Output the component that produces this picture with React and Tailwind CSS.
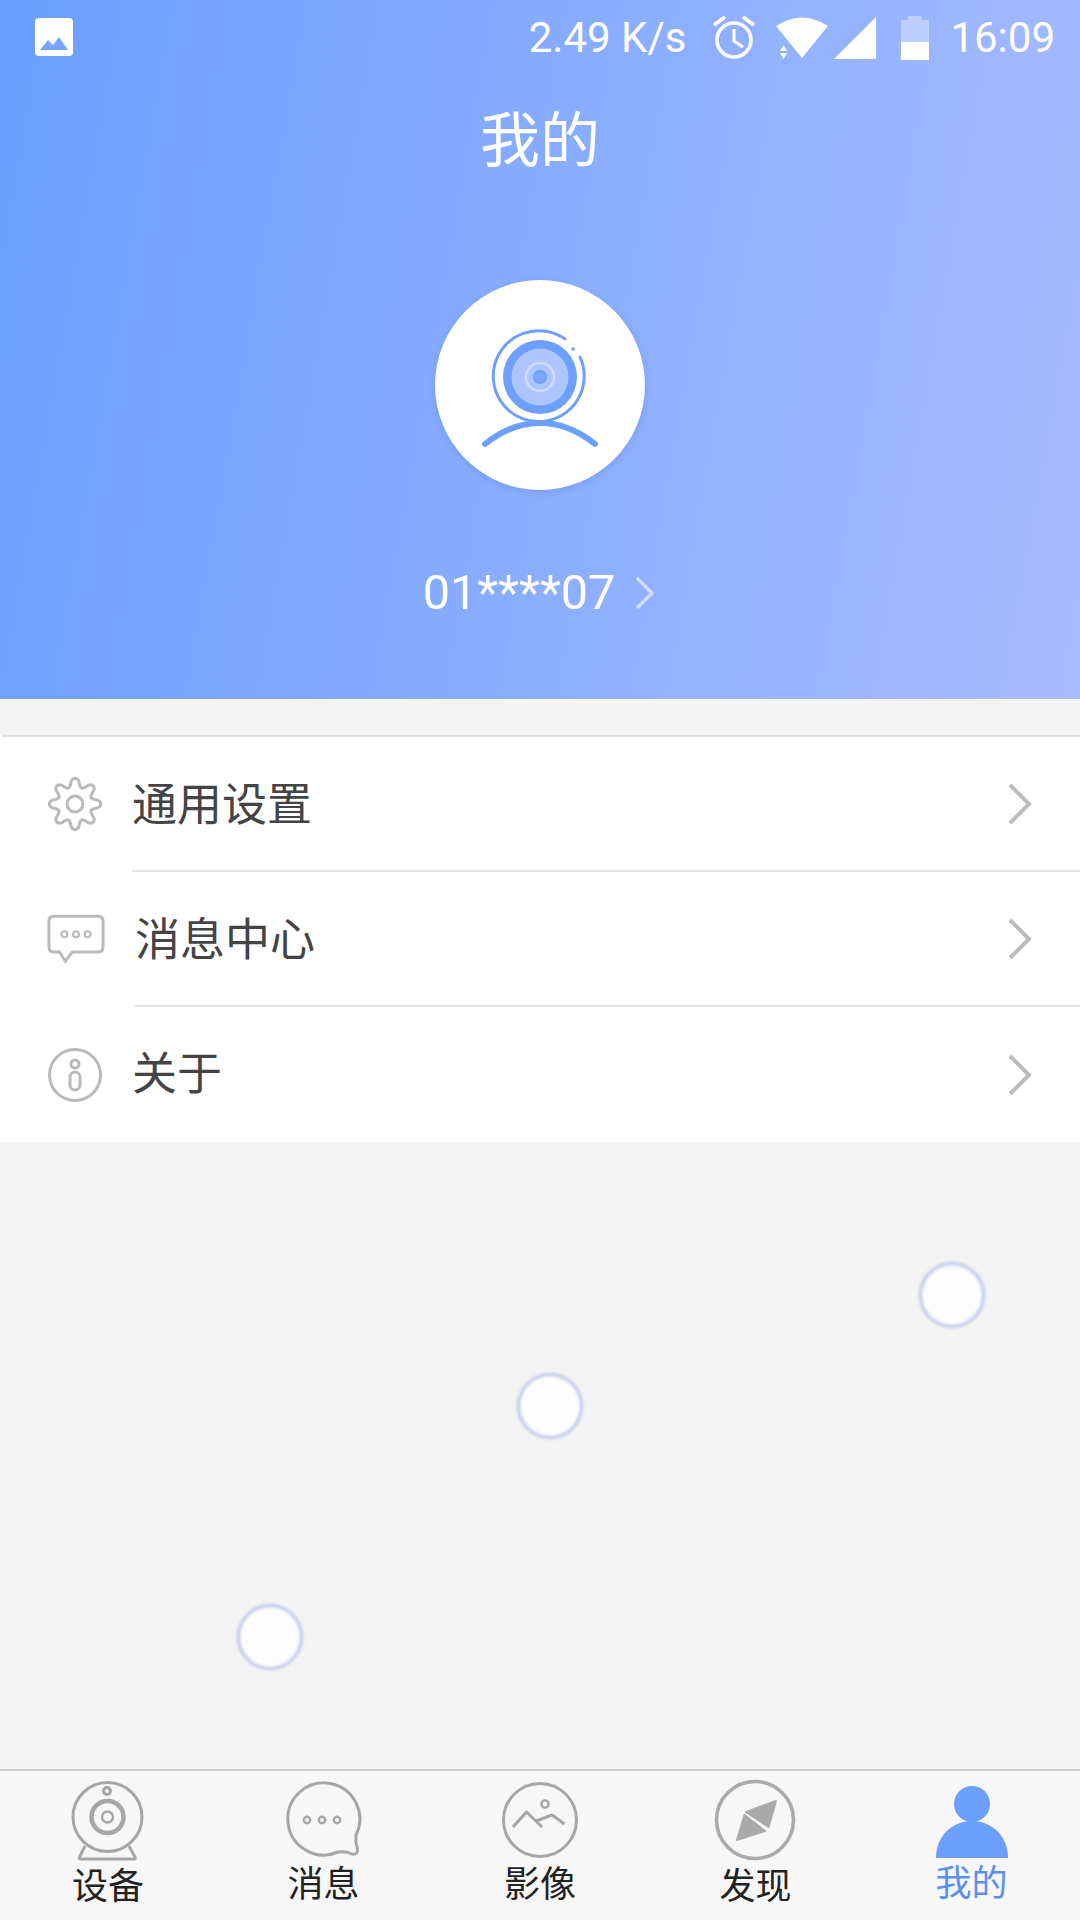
import React from 'react';

function gearPath(cx, cy){
  // rounded 8 lobe outline
  const pts = [];
  for (let i = 0; i < 160; i++) {
    const a = (i / 160) * Math.PI * 2;
    const c = Math.cos(8 * (a + Math.PI / 2));
    const r = 21.5 + 4.2 * Math.sign(c) * Math.pow(Math.abs(c), 0.7);
    pts.push(`${(cx + r * Math.cos(a)).toFixed(2)} ${(cy + r * Math.sin(a)).toFixed(2)}`);
  }
  return `M${pts.join('L')}Z`;
}

function Chevron(){
  return (
    <svg width="24" height="42" viewBox="0 0 24 42" fill="none" className="shrink-0">
      <path d="M2 2 L21 21 L2 40" stroke="#bcbcbc" strokeWidth="4" />
    </svg>
  );
}

function GearIcon(){
  return (
    <svg width="60" height="60" viewBox="0 0 60 60" fill="none" stroke="#bababa" strokeWidth="3">
      <path d={gearPath(30, 30)} />
      <circle cx="30" cy="30" r="8" />
    </svg>
  );
}

function MessageIcon(){
  return (
    <svg width="60" height="50" viewBox="0 0 60 50" fill="none" stroke="#bababa" strokeWidth="3" className="ml-[2px]">
      <path d="M7 1.5 H53 Q58 1.5 58 6.5 V33 Q58 38.5 53 38.5 H26 L19 48 L13 38.5 H7 Q2 38.5 2 33 V6.5 Q2 1.5 7 1.5 Z" />
      <circle cx="18" cy="20" r="3" strokeWidth="2.2" />
      <circle cx="30" cy="20" r="3" strokeWidth="2.2" />
      <circle cx="42" cy="20" r="3" strokeWidth="2.2" />
    </svg>
  );
}

function InfoIcon(){
  return (
    <svg width="60" height="60" viewBox="0 0 60 60" fill="none" stroke="#bababa" strokeWidth="3">
      <circle cx="30" cy="30" r="25.5" />
      <circle cx="30" cy="19" r="4" />
      <rect x="25" y="27" width="10" height="18" rx="5" />
    </svg>
  );
}

const rows = [
  { label: '通用设置', icon: <GearIcon />, cls: 'h-[133px]', text: 'ml-[27px] mt-[4px]' },
  { label: '消息中心', icon: <MessageIcon />, cls: 'h-[133px]', text: 'ml-[30px] mt-[4px]' },
  { label: '关于', icon: <InfoIcon />, cls: 'h-[135px]', text: 'ml-[27px]' },
];

function DeviceIcon(){
  return (
    <svg width="96" height="96" viewBox="0 0 96 96" fill="none" stroke="#a6a6a6" strokeWidth="3">
      <circle cx="47.5" cy="46" r="34.5" />
      <circle cx="47" cy="20" r="3.5" />
      <circle cx="47.5" cy="46" r="16" strokeWidth="4.5" />
      <circle cx="47.5" cy="46" r="5.5" strokeWidth="2.4" />
      <path d="M25 75 L19.5 86 Q19 88 21 88 H74 Q76 88 75 86 L69 75" />
    </svg>
  );
}

function ChatIcon(){
  return (
    <svg width="96" height="96" viewBox="0 0 96 96" fill="none" stroke="#a6a6a6" strokeWidth="3" className="ml-[-3px]">
      <path d="M81 64 A36 36 0 1 0 63 81 Q71 80 77 83 Q83 84 82.5 78 Q80 71 81 64 Z" strokeLinejoin="round" />
      <circle cx="32" cy="49" r="3.2" strokeWidth="2.4" />
      <circle cx="47" cy="49" r="3.2" strokeWidth="2.4" />
      <circle cx="62" cy="49" r="3.2" strokeWidth="2.4" />
    </svg>
  );
}

function GalleryIcon(){
  return (
    <svg width="96" height="96" viewBox="0 0 96 96" fill="none" stroke="#a6a6a6" strokeWidth="3">
      <circle cx="48" cy="49" r="36.5" />
      <circle cx="53" cy="33" r="3.6" strokeWidth="2.4" />
      <path d="M21 56 L34.5 41 L50 56 M44 50 L60 44 L72.5 53" strokeLinejoin="round" />
    </svg>
  );
}

function CompassIcon(){
  return (
    <svg width="96" height="96" viewBox="0 0 96 96" fill="none">
      <circle cx="47" cy="49" r="38.5" stroke="#aaaaaa" strokeWidth="3.6" />
      <path d="M38 41 L68 30 L60.5 56 Z" fill="#aaaaaa" stroke="#aaaaaa" strokeWidth="2" strokeLinejoin="round" />
      <path d="M36.5 44 L57 60 L29 69 Z" fill="#aaaaaa" stroke="#aaaaaa" strokeWidth="2" strokeLinejoin="round" />
    </svg>
  );
}

function PersonIcon(){
  return (
    <svg width="96" height="96" viewBox="0 0 96 96" fill="#6d9fff">
      <circle cx="48" cy="33" r="18" />
      <path d="M12 87 C12 65 28 50 48 50 C68 50 84 65 84 87 Z" />
    </svg>
  );
}

const tabs = [
  { label: '设备', icon: <DeviceIcon />, cls: 'mt-[2px] text-[#222222]' },
  { label: '消息', icon: <ChatIcon />, cls: 'mt-[0px] ml-[-1px] text-[#222222]' },
  { label: '影像', icon: <GalleryIcon />, cls: 'mt-[0px] text-[#222222]' },
  { label: '发现', icon: <CompassIcon />, cls: 'mt-[2px] ml-[-1px] text-[#222222]' },
  { label: '我的', icon: <PersonIcon />, cls: 'mt-[-1px] ml-[-1px] text-[#5d8fee]' },
];

function StatusBar(){
  return (
    <div className="flex h-[76px] w-full items-center pl-[35px] pr-[25px] text-white">
      <svg width="38" height="38" viewBox="0 0 38 38" className="mt-[-3px]">
        <rect width="38" height="38" rx="4" fill="#ffffff" />
        <path d="M5 32 L13 22 L18 27 L24 19 L33 32 Z" fill="#76a5ff" />
      </svg>
      <span className="ml-auto text-[42px] leading-none">2.49 K/s</span>
      <svg width="44" height="46" viewBox="0 0 44 46" fill="none" stroke="#ffffff" strokeWidth="3.6" className="ml-[26px] mt-[-2px]">
        <circle cx="22" cy="26" r="17" />
        <path d="M22 15 V27 L31 33" strokeWidth="3" />
        <path d="M2 11 L13 3 M31 3 L42 11" strokeWidth="4" />
      </svg>
      <svg width="52" height="44" viewBox="0 0 52 44" fill="#ffffff" className="ml-[20px] mt-[-2px]">
        <path d="M0 11 Q26 -6 52 11 L26 43 Z" />
        <path d="M4 36 L7.5 30 L11 36 Z M4 38 H11 L7.5 44 Z" />
      </svg>
      <svg width="42" height="42" viewBox="0 0 42 42" fill="#ffffff" className="ml-[6px]">
        <path d="M0 42 L42 0 V42 Z" />
      </svg>
      <svg width="28" height="44" viewBox="0 0 28 44" className="ml-[25px]">
        <path d="M7 0 H21 V4 H28 V26 H0 V4 H7 Z" fill="#ffffff" fillOpacity="0.35" />
        <rect y="26" width="28" height="18" fill="#ffffff" />
      </svg>
      <span className="ml-[21px] text-[42px] leading-none">16:09</span>
    </div>
  );
}

export default function App(){
  return (
    <div lang="zh-CN" className="relative flex h-[1920px] w-[1080px] flex-col overflow-hidden bg-[#f4f4f4] font-[Roboto,'Noto_Sans_CJK_SC',sans-serif]">
      {/* Header */}
      <div className="flex h-[699px] flex-col items-center bg-[linear-gradient(100deg,#6a9eff,#a8bcff)]">
        <StatusBar />
        <div className="pt-[1px] text-[60px] leading-[130px] text-white">我的</div>
        <div className="mt-[73px] flex h-[210px] w-[210px] items-center justify-center rounded-full bg-white shadow-[0_2px_6px_rgba(70,100,180,0.25)]">
          <svg width="130" height="130" viewBox="0 0 130 130" fill="none">
            <path d="M90 19 A45.5 45.5 0 1 0 105 37" stroke="#6d9fff" strokeWidth="3" strokeLinecap="round" />
            <circle cx="98" cy="29" r="1.8" fill="#6d9fff" />
            <circle cx="65" cy="57" r="37" fill="#6d9fff" />
            <circle cx="65" cy="57" r="28.5" fill="#adc6ff" />
            <circle cx="65" cy="57" r="14" stroke="#cfdcff" strokeWidth="2.4" />
            <circle cx="65" cy="57" r="6" fill="#7aa7ff" stroke="#6d9fff" strokeWidth="2" />
            <path d="M10 124 C45 96 85 96 120 124" stroke="#6d9fff" strokeWidth="6" strokeLinecap="round" />
          </svg>
        </div>
        <div className="ml-[-2px] mt-[73px] flex items-center text-[48.5px] leading-[60px] text-white">
          <span>01****07</span>
          <svg width="20" height="34" viewBox="0 0 20 34" fill="none" stroke="#ffffff" strokeOpacity="0.55" strokeWidth="3.4" className="ml-[20px]">
            <path d="M2 2 L17 17 L2 32" />
          </svg>
        </div>
      </div>

      {/* Menu */}
      <div className="mt-[36px] bg-white">
        <div className="ml-[2px] h-[2px] bg-[#e2e2e2]" />
        {rows.map((r, i) => (
          <div key={r.label}>
            <div className={`flex items-center pl-[45px] pr-[48px] ${r.cls}`}>
              <div className="flex w-[60px] justify-center">{r.icon}</div>
              <span className={`text-[45px] leading-none text-[#444444] ${r.text}`}>{r.label}</span>
              <div className="ml-auto"><Chevron /></div>
            </div>
            {i === 0 && <div className="ml-[132px] h-[2px] bg-[#e2e2e2]" />}
            {i === 1 && <div className="ml-[135px] h-[2px] bg-[#e2e2e2]" />}
          </div>
        ))}
      </div>

      <div className="flex-1" />

      {/* Bottom tabs */}
      <div className="grid h-[151px] grid-cols-5 border-t-2 border-[#cfcfcf] bg-[#f7f7f7]">
        {tabs.map(t => (
          <div key={t.label} className="flex flex-col items-center">
            {t.icon}
            <span className={`text-[36px] leading-[36px] ${t.cls}`}>{t.label}</span>
          </div>
        ))}
      </div>

      {/* Floating dots */}
      <div className="absolute left-[517px] top-[1373px] h-[66px] w-[66px] rounded-full border-[3px] border-[#bcc5e8] bg-[#fdfdff] blur-[1.5px]" />
      <div className="absolute left-[919px] top-[1262px] h-[66px] w-[66px] rounded-full border-[3px] border-[#bcc5e8] bg-[#fdfdff] blur-[1.5px]" />
      <div className="absolute left-[237px] top-[1604px] h-[66px] w-[66px] rounded-full border-[3px] border-[#bcc5e8] bg-[#fdfdff] blur-[1.5px]" />
    </div>
  );
}
